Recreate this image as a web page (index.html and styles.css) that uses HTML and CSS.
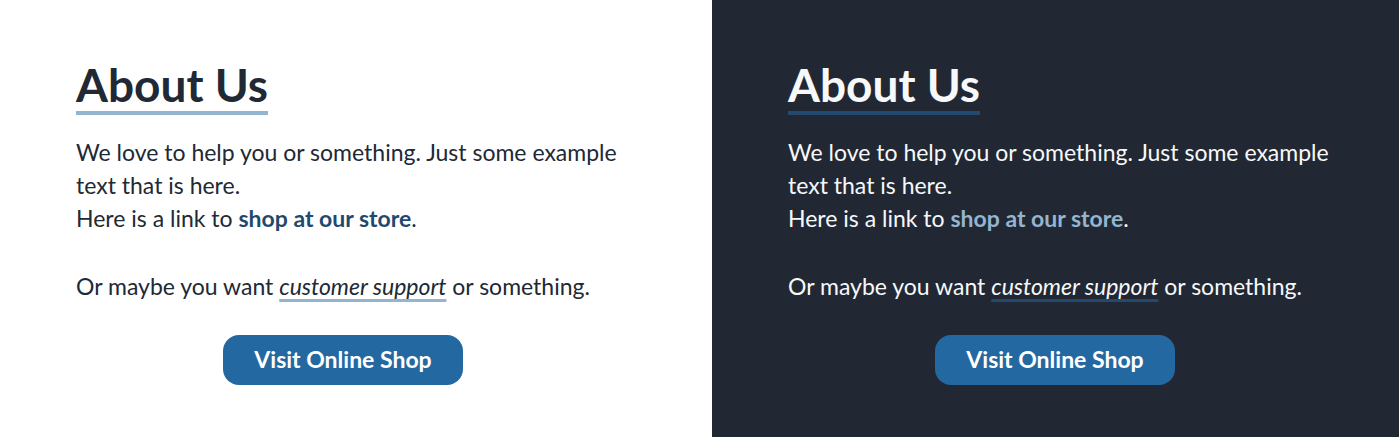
FILE: index.html
```html
<!DOCTYPE html>
<html lang="en">
<head>
<meta charset="utf-8">
<title>About Us</title>
<link rel="stylesheet" href="styles.css">
</head>
<body>
<main class="split">
  <section class="panel panel-light">
    <div class="content">
      <h1 class="title">About Us</h1>
      <p class="text">We love to help you or something. Just some example text that is here.<br>Here is a link to <a class="link-strong" href="#">shop at our store</a>.</p>
      <p class="text text-gap">Or maybe you want <a class="link-em" href="#">customer support</a> or something.</p>
      <div class="actions"><a class="button" href="#">Visit Online Shop</a></div>
    </div>
  </section>
  <section class="panel panel-dark">
    <div class="content">
      <h1 class="title">About Us</h1>
      <p class="text">We love to help you or something. Just some example text that is here.<br>Here is a link to <a class="link-strong" href="#">shop at our store</a>.</p>
      <p class="text text-gap">Or maybe you want <a class="link-em" href="#">customer support</a> or something.</p>
      <div class="actions"><a class="button" href="#">Visit Online Shop</a></div>
    </div>
  </section>
</main>
</body>
</html>
```
FILE: styles.css
```css
* { box-sizing: border-box; }
html, body { margin: 0; padding: 0; height: 100%; }
body { font-family: Lato, "Noto Sans", sans-serif; }
.split {
  display: grid;
  grid-template-columns: 712px 1fr;
  min-height: 437px;
}
.panel { padding: 62px 76px 0 76px; }
.panel-light { background: #ffffff; color: #212935; }
.panel-dark { background: #212833; color: #f7f8fa; }
.content { width: 560px; }
.title {
  display: inline-block;
  margin: 0 0 21px 0;
  font-size: 46px;
  line-height: 46px;
  font-weight: 700;
  border-bottom: 4px solid #94b5d0;
  padding-bottom: 3px;
}
.panel-dark .title { border-bottom-color: #234a6e; }
.text {
  margin: 0;
  font-size: 23px;
  line-height: 33px;
}
.text-gap { margin-top: 35px; }
.link-strong { font-weight: 700; text-decoration: none; color: #1f4a6e; }
.panel-dark .link-strong { color: #94b5d0; }
.link-em {
  font-style: italic;
  color: inherit;
  text-decoration: underline;
  text-decoration-color: #94b5d0;
  text-decoration-thickness: 3px;
  text-underline-offset: 4px;
}
.panel-dark .link-em { text-decoration-color: #234a6e; }
.actions { display: flex; justify-content: center; width: 534px; margin-top: 32px; }
.button {
  display: inline-flex;
  align-items: center;
  justify-content: center;
  width: 240px;
  height: 50px;
  padding-bottom: 2px;
  border-radius: 16px;
  background: #2468a2;
  color: #ffffff;
  font-size: 23px;
  font-weight: 700;
  text-decoration: none;
}
```
